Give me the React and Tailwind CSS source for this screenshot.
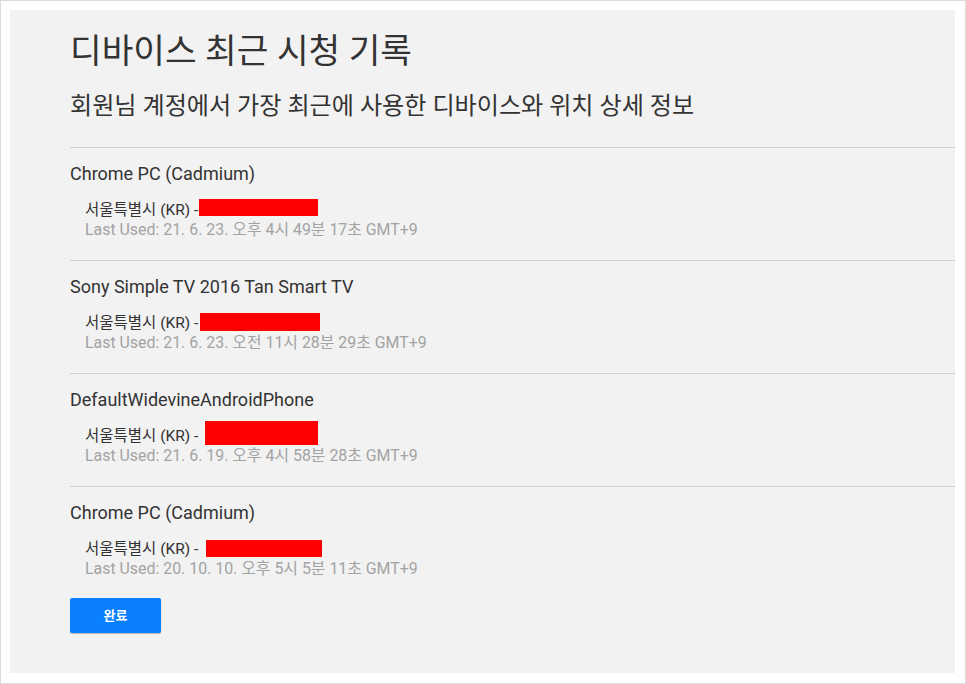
const KR = "font-['Roboto','Noto_Sans_CJK_KR',sans-serif]";

const devices = [
  { name: 'Chrome PC (Cadmium)', used: '21. 6. 23. 오후 4시 49분 17초 GMT+9', box: 'ml-[1px] mt-[-2px] w-[119px] h-[17px]' },
  { name: 'Sony Simple TV 2016 Tan Smart TV', used: '21. 6. 23. 오전 11시 28분 29초 GMT+9', box: 'ml-[2px] mt-[-1px] w-[120px] h-[18px]' },
  { name: 'DefaultWidevineAndroidPhone', used: '21. 6. 19. 오후 4시 58분 28초 GMT+9', box: 'ml-[7px] mt-[-6px] w-[113px] h-[24px]' },
  { name: 'Chrome PC (Cadmium)', used: '20. 10. 10. 오후 5시 5분 11초 GMT+9', box: 'ml-[8px] mt-[0px] w-[116px] h-[17px]' },
];

const DeviceRow = ({ device }) => (
  <div className="border-t border-[#cfcfcf] pt-[14px] pb-[21px]">
    <p className="h-[24px] text-[18px] leading-[24px] text-[#333]">{device.name}</p>
    <div className="mt-[15px] pl-[15px]">
      <div className="flex items-start h-[19px] text-[15.5px] leading-[19px] text-[#333]">
        <span>서울특별시 (KR) -</span>
        <span className={`block shrink-0 bg-[#ff0000] ${device.box}`} />
      </div>
      <p className="h-[19px] text-[15.9px] leading-[19px] text-[#a3a3a3]">Last Used: {device.used}</p>
    </div>
  </div>
);

export default function App() {
  return (
    <div className={`w-[966px] h-[684px] bg-white border border-[#dcdcdc] pt-[9px] pl-[9px] pr-[10px] pb-[10px] ${KR}`}>
      <div className="h-full bg-[#f2f2f2] pl-[60px] pt-[20px]">
        <h1 className="h-[42px] text-[34.4px] leading-[42px] text-[#333] font-normal">디바이스 최근 시청 기록</h1>
        <h2 className="mt-[19px] h-[30px] text-[24.1px] leading-[30px] text-[#333] font-normal">
          회원님 계정에서 가장 최근에 사용한 디바이스와 위치 상세 정보
        </h2>
        <div className="mt-[26px]">
          {devices.map((d, i) => (
            <DeviceRow key={i} device={d} />
          ))}
        </div>
        <button className="mt-[-1px] w-[91px] h-[35px] rounded-[2px] bg-[#0a80ff] text-white text-[13px] font-bold shadow-[0_1px_1px_rgba(0,0,0,0.25)]">
          완료
        </button>
      </div>
    </div>
  );
}
